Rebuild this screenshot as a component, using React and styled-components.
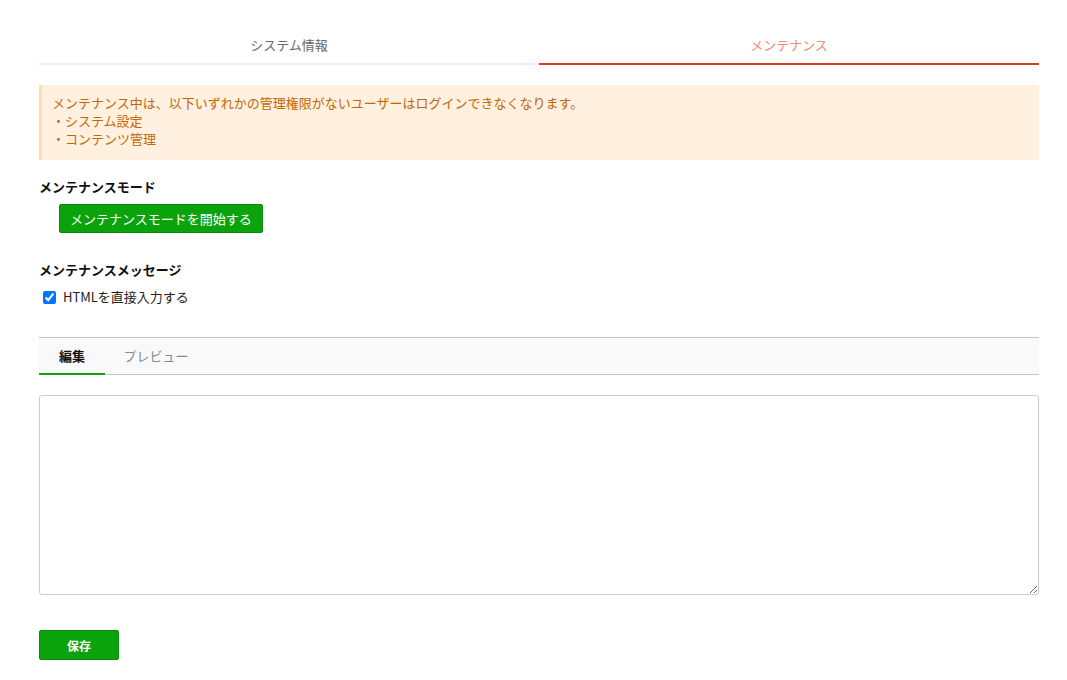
import styled, { createGlobalStyle } from "styled-components";
import { useState } from "react";

const GlobalStyle = createGlobalStyle`
  body {
    margin: 0;
    background: #fff;
    font-family: "Noto Sans CJK JP", "Noto Sans", sans-serif;
    font-size: 13px;
    color: #222;
  }
`;

const Page = styled.div`
  width: 1000px;
  padding: 27px 0 20px 39px;
`;

const Tabs = styled.div`
  display: flex;
`;

const Tab = styled.div`
  flex: 1;
  text-align: center;
  line-height: 18px;
  padding: 9px 0;
  font-size: 13px;
  color: ${(p) => (p.active ? "#f0897a" : "#666")};
  border-bottom: 2px solid ${(p) => (p.active ? "#e0391f" : "#eeeeee")};
`;

const Alert = styled.div`
  margin-top: 20px;
  background: #fff0e0;
  border-left: 3px solid #ffdcb2;
  color: #c46700;
  padding: 9px 10px 12px;
  line-height: 18px;
  font-size: 13px;
`;

const Label = styled.div`
  margin-top: ${(p) => p.gap}px;
  font-weight: bold;
  line-height: 18px;
  color: #111;
`;

const StartButton = styled.button`
  margin: 8px 0 0 20px;
  height: 29px;
  padding: 0 10px;
  background: #0ba30b;
  border: 1px solid #0a8a0a;
  border-radius: 2px;
  color: #fff;
  font-family: inherit;
  font-size: 13px;
  cursor: pointer;
`;

const CheckRow = styled.label`
  display: flex;
  align-items: center;
  margin-top: 9px;
  line-height: 18px;
  color: #222;

  input {
    margin: 0 7px 0 4px;
    width: 13px;
    height: 13px;
  }
`;

const EditorTabs = styled.div`
  display: flex;
  margin-top: 31px;
  background: #f9f9f9;
  border-top: 1px solid #c4c4c4;
  border-bottom: 1px solid #c4c4c4;
`;

const EditorTab = styled.div`
  width: ${(p) => p.w}px;
  text-align: center;
  line-height: 18px;
  padding: 9px 0 8px;
  margin-bottom: -1px;
  font-weight: ${(p) => (p.active ? "bold" : "normal")};
  color: ${(p) => (p.active ? "#111" : "#888")};
  border-bottom: 2px solid ${(p) => (p.active ? "#12a312" : "transparent")};
`;

const TextArea = styled.textarea`
  display: block;
  box-sizing: border-box;
  margin-top: 20px;
  width: 1000px;
  height: 200px;
  border: 1px solid #cccccc;
  border-radius: 3px;
  font-family: inherit;
  font-size: 13px;
  padding: 6px 8px;
  resize: vertical;
`;

const SaveButton = styled.button`
  margin-top: 35px;
  width: 80px;
  height: 30px;
  background: #0ba30b;
  border: 1px solid #0a8a0a;
  border-radius: 2px;
  color: #fff;
  font-family: inherit;
  font-weight: bold;
  font-size: 12px;
  cursor: pointer;
`;

export default function App() {
  const [html, setHtml] = useState(true);
  return (
    <Page>
      <GlobalStyle />
      <Tabs>
        <Tab>システム情報</Tab>
        <Tab active>メンテナンス</Tab>
      </Tabs>
      <Alert>
        メンテナンス中は、以下いずれかの管理権限がないユーザーはログインできなくなります。
        <br />・システム設定
        <br />・コンテンツ管理
      </Alert>
      <Label gap={18}>メンテナンスモード</Label>
      <StartButton>メンテナンスモードを開始する</StartButton>
      <Label gap={28}>メンテナンスメッセージ</Label>
      <CheckRow>
        <input type="checkbox" checked={html} onChange={(e) => setHtml(e.target.checked)} />
        HTMLを直接入力する
      </CheckRow>
      <EditorTabs>
        <EditorTab w={66} active>編集</EditorTab>
        <EditorTab w={102}>プレビュー</EditorTab>
      </EditorTabs>
      <TextArea />
      <SaveButton>保存</SaveButton>
    </Page>
  );
}
